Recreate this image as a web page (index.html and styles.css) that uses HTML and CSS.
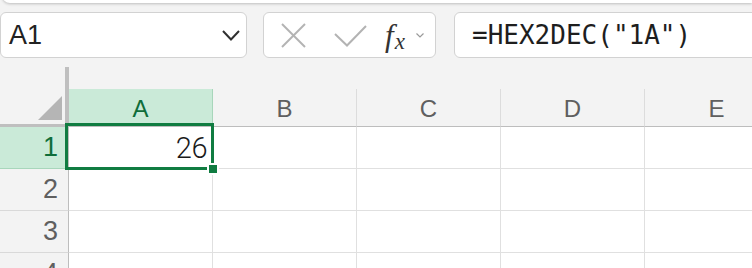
FILE: index.html
```html
<!DOCTYPE html>
<html lang="en">

<head>
  <meta charset="UTF-8" />
  <title>HEX2DEC</title>
  <link rel="stylesheet" href="styles.css">
</head>

<body>
  <div class="ribbon"></div>

  <div class="bar">
    <div class="box namebox">
      <span class="ref">A1</span>
      <svg class="chev" width="18" height="11" viewBox="0 0 18 11">
        <polyline points="1,1 9,9.5 17,1" fill="none" stroke="#303030" stroke-width="2" />
      </svg>
    </div>
    <div class="box tools">
      <svg class="cancel" width="25" height="25" viewBox="0 0 25 25">
        <line x1="1" y1="1" x2="24" y2="24" stroke="#b3b3b3" stroke-width="2" />
        <line x1="24" y1="1" x2="1" y2="24" stroke="#b3b3b3" stroke-width="2" />
      </svg>
      <svg class="enter" width="33" height="22" viewBox="0 0 33 22">
        <polyline points="1,9 13,20.5 32,1" fill="none" stroke="#b3b3b3" stroke-width="2" />
      </svg>
      <span class="fx"><i>f</i><i class="sub">x</i></span>
      <svg class="more" width="8" height="5" viewBox="0 0 8 5">
        <polyline points="0.5,0.5 4,4 7.5,0.5" fill="none" stroke="#9a9a9a" stroke-width="1.2" />
      </svg>
    </div>
    <div class="box formula">=HEX2DEC("1A")</div>
  </div>

  <div class="sheet">
    <div class="corner"><span class="tri"></span></div>
    <div class="colhead active">A</div>
    <div class="colhead">B</div>
    <div class="colhead">C</div>
    <div class="colhead">D</div>
    <div class="colhead">E</div>

    <div class="rowhead active">1</div>
    <div class="cell selected">
      <span class="num">26</span>
      <span class="outline"></span>
      <span class="handle"></span>
    </div>
    <div class="cell"></div>
    <div class="cell"></div>
    <div class="cell"></div>
    <div class="cell"></div>

    <div class="rowhead">2</div>
    <div class="cell"></div>
    <div class="cell"></div>
    <div class="cell"></div>
    <div class="cell"></div>
    <div class="cell"></div>

    <div class="rowhead">3</div>
    <div class="cell"></div>
    <div class="cell"></div>
    <div class="cell"></div>
    <div class="cell"></div>
    <div class="cell"></div>

    <div class="rowhead">4</div>
    <div class="cell"></div>
    <div class="cell"></div>
    <div class="cell"></div>
    <div class="cell"></div>
    <div class="cell"></div>
  </div>
</body>

</html>
```

FILE: styles.css
```css
* {
  margin: 0;
  padding: 0;
  box-sizing: border-box;
}

body {
  width: 752px;
  height: 268px;
  overflow: hidden;
  background-color: #f3f3f3;
  font-family: "Liberation Sans", Arial, sans-serif;
  color: #222;
}

/* ribbon edge at the top */
.ribbon {
  height: 20px;
  margin: -17px 0 0 2px;
  background-color: #fff;
  border-bottom-left-radius: 8px;
  box-shadow: 0 1px 3px rgba(0, 0, 0, .22);
}

/* name box + formula bar */
.bar {
  display: flex;
  height: 46px;
  margin-top: 9px;
}

.box {
  height: 46px;
  background-color: #fff;
  border: 1px solid #d2d2d2;
  border-radius: 6px;
  display: flex;
  align-items: center;
}

.namebox {
  width: 247px;
  padding: 0 6px 0 8px;
  justify-content: space-between;
}

.ref {
  font-size: 27px;
}

.tools {
  width: 173px;
  margin-left: 16px;
  padding-left: 17px;
}

.tools .enter {
  margin-left: 28px;
  margin-top: 1px;
}

.fx {
  margin-left: 18px;
  font-family: "Liberation Serif", serif;
  font-size: 31px;
  color: #333;
  line-height: 1;
  white-space: nowrap;
}

.fx .sub {
  font-size: 23px;
  margin-left: 1px;
  position: relative;
  top: 3px;
}

.tools .more {
  margin-left: 11px;
}

.formula {
  flex: 1;
  margin: 0 -12px 0 18px;
  padding-left: 17px;
  font-family: "DejaVu Sans Mono", monospace;
  font-size: 26px;
  color: #1e1e1e;
}

/* grid */
.sheet {
  display: grid;
  grid-template-columns: 69px repeat(5, 144px);
  grid-template-rows: 60px repeat(4, 42px);
  margin-top: 9px;
}

.corner {
  border-right: 4px solid #bfbfbf;
  border-bottom: 3px solid #bfbfbf;
  display: flex;
  justify-content: flex-end;
  align-items: flex-end;
  padding: 0 3px 4px 0;
}

.tri {
  width: 0;
  height: 0;
  border-left: 24px solid transparent;
  border-bottom: 24px solid #b5b5b5;
}

.colhead {
  align-self: end;
  height: 38px;
  border-right: 1px solid #dcdcdc;
  border-bottom: 1px solid #bdbdbd;
  display: flex;
  align-items: center;
  justify-content: center;
  font-size: 24px;
  color: #5f5f5f;
  padding-top: 2px;
}

.colhead.active {
  background-color: #caead8;
  color: #0f6d3a;
  border-right-color: #a8d6bb;
}

.rowhead {
  border-right: 1px solid #bdbdbd;
  border-bottom: 1px solid #d9d9d9;
  display: flex;
  align-items: center;
  justify-content: flex-end;
  padding-right: 10px;
  font-size: 27px;
  color: #5f5f5f;
}

.rowhead.active {
  background-color: #caead8;
  color: #0f6d3a;
  border-bottom-color: #a8d6bb;
}

.cell {
  background-color: #fff;
  border-right: 1px solid #e0e0e0;
  border-bottom: 1px solid #e0e0e0;
}

.selected {
  position: relative;
  display: flex;
  align-items: center;
  justify-content: flex-end;
  padding-right: 5px;
}

.num {
  font-family: Roboto, "Liberation Sans", sans-serif;
  font-size: 29px;
  font-weight: 300;
  letter-spacing: -0.5px;
  color: #1a1a1a;
}

.outline {
  position: absolute;
  left: -4px;
  top: -4px;
  right: -2px;
  bottom: -2px;
  border: 3px solid #107c41;
}

.handle {
  position: absolute;
  left: 140px;
  top: 38px;
  width: 8px;
  height: 8px;
  background-color: #107c41;
  box-shadow: 0 0 0 2px #fff;
}
```
